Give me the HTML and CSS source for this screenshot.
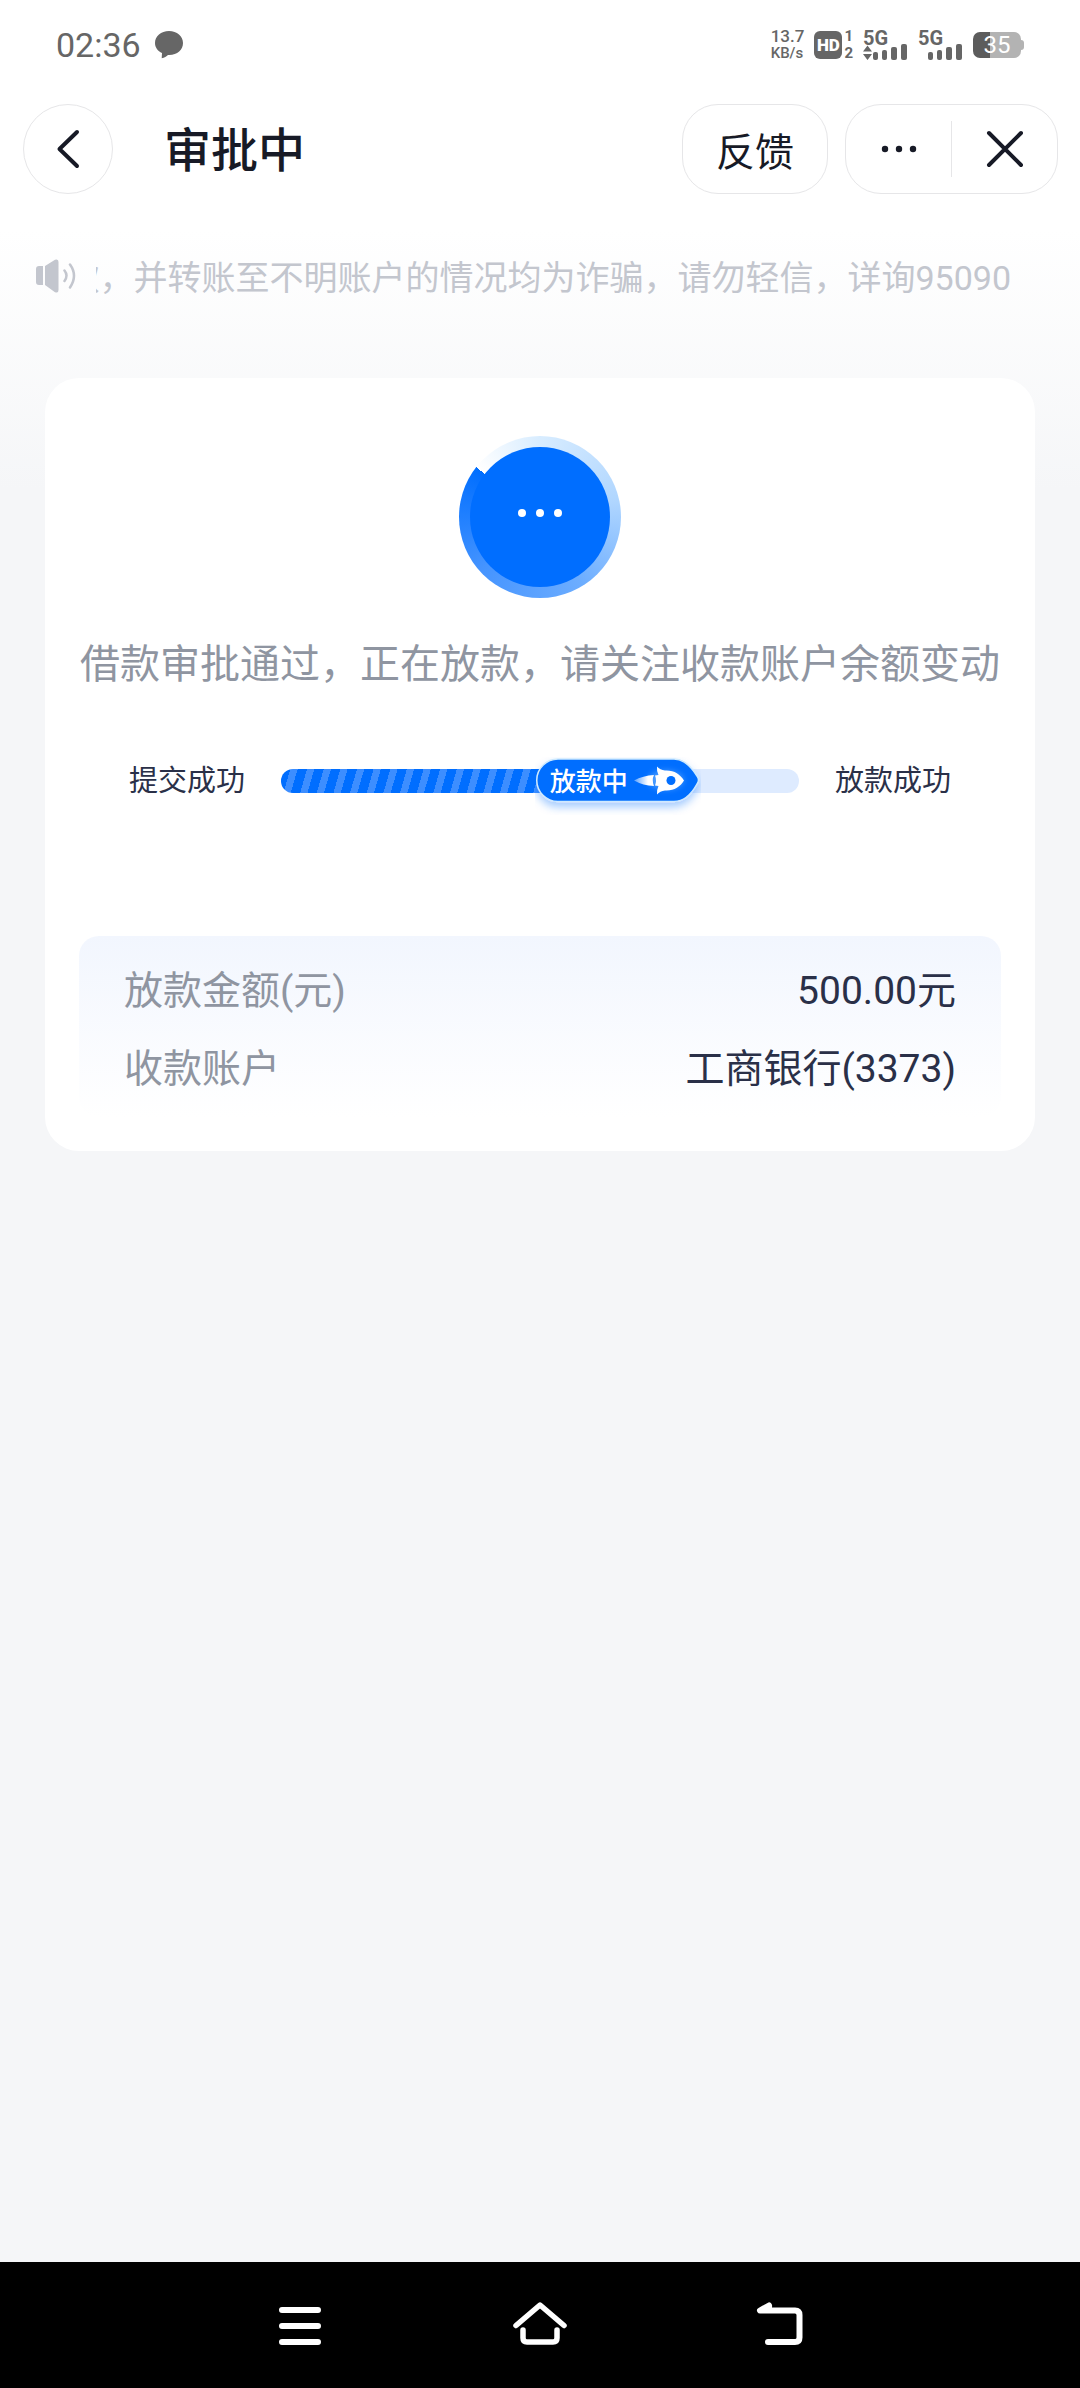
FILE: index.html
```html
<!DOCTYPE html>
<html lang="zh-CN">
<head>
<meta charset="utf-8">
<meta name="viewport" content="width=device-width, initial-scale=1">
<title>审批中</title>
<link rel="stylesheet" href="styles.css">
</head>
<body>
<div class="status">
  <div class="status-left">
    <time class="clock">02:36</time>
    <svg class="icon" width="28" height="28" viewBox="0 0 28 28" aria-hidden="true"><path fill="#666" d="M14 0C6 0 0 5 0 12c0 4.500 2.800 8 7 10l-.3 5.300c2.800-.6 4.800-1.800 6.300-3.300C22 24.500 28 19 28 12 28 5 22 0 14 0z"/></svg>
  </div>
  <div class="status-right">
    <div class="speed"><span class="speed-value">13.7</span><span class="speed-unit">KB/s</span></div>
    <div class="hd">
      <span class="hd-box">HD</span>
      <span class="hd-sims"><span>1</span><span>2</span></span>
    </div>
    <div class="signal">
      <span class="signal-type">5G</span>
      <svg class="signal-bars" width="45" height="17" viewBox="0 0 45 17" aria-hidden="true"><g fill="#666"><path d="M0 7.500 4.500 1.500 9 7.500zM0 10h9l-4.500 6z"/><rect x="10" y="8" width="5" height="8" rx="2"/><rect x="19" y="6" width="5" height="10" rx="2"/><rect x="28" y="3" width="6" height="13" rx="2"/><rect x="38" y="0" width="6" height="16" rx="2"/></g></svg>
    </div>
    <div class="signal">
      <span class="signal-type">5G</span>
      <svg class="signal-bars" width="45" height="17" viewBox="0 0 45 17" aria-hidden="true"><g fill="#666"><rect x="10" y="8" width="5" height="8" rx="2"/><rect x="19" y="6" width="5" height="10" rx="2"/><rect x="28" y="3" width="6" height="13" rx="2"/><rect x="38" y="0" width="6" height="16" rx="2"/></g></svg>
    </div>
    <div class="battery"><span class="battery-level">35</span></div>
  </div>
</div>

<header class="header">
  <button class="back" type="button" aria-label="返回">
    <svg width="24" height="40" viewBox="0 0 24 40" aria-hidden="true"><path d="M21 3 3.500 20 21 37" fill="none" stroke="#171a26" stroke-width="4" stroke-linecap="round" stroke-linejoin="round"/></svg>
  </button>
  <h1 class="title">审批中</h1>
  <button class="feedback" type="button">反馈</button>
  <div class="capsule">
    <button class="capsule-btn" type="button" aria-label="更多">
      <svg width="36" height="8" viewBox="0 0 36 8" aria-hidden="true"><g fill="#171a26"><circle cx="4" cy="4" r="3.200"/><circle cx="18" cy="4" r="3.200"/><circle cx="32" cy="4" r="3.200"/></g></svg>
    </button>
    <button class="capsule-btn" type="button" aria-label="关闭">
      <svg width="38" height="38" viewBox="0 0 38 38" aria-hidden="true"><path d="M3 3 35 35M35 3 3 35" fill="none" stroke="#171a26" stroke-width="4" stroke-linecap="round"/></svg>
    </button>
  </div>
</header>

<main class="page">
  <div class="notice">
    <svg class="icon" width="40" height="34" viewBox="0 0 40 34" aria-hidden="true"><path fill="#c3c6ce" d="M0 10q0-3 3-3h4v19H3q-3 0-3-3zM9 7 19 .8Q22.500-.6 22.500 3v28q0 3.600-3.500 2.200L9 26z"/><path fill="none" stroke="#c3c6ce" stroke-width="2.500" stroke-linecap="round" d="M28.500 11.500q4 5 0 10.500M34 5.500q8 11 0 23"/></svg>
    <p class="notice-text"><span>款，并转账至不明账户的情况均为诈骗，请勿轻信，详询95090</span></p>
  </div>

  <section class="card">
    <div class="ring"><div class="ring-core"><i></i><i></i><i></i></div></div>
    <p class="message">借款审批通过，正在放款，请关注收款账户余额变动</p>

    <div class="progress">
      <span>提交成功</span>
      <div class="track">
        <div class="fill"></div>
        <div class="marker">
          <svg class="marker-shape" width="166" height="62" viewBox="0 0 166 62" aria-hidden="true">
            <defs>
              <filter id="drop" x="-10%" y="-20%" width="120%" height="150%"><feDropShadow dx="0" dy="5" stdDeviation="4" flood-color="#006eff" flood-opacity=".35"/></filter>
              <filter id="glow" x="-50%" y="-50%" width="200%" height="200%"><feGaussianBlur stdDeviation="3"/></filter>
              <linearGradient id="flame"><stop offset="0" stop-color="#fff" stop-opacity=".35"/><stop offset=".7" stop-color="#fff"/></linearGradient>
            </defs>
            <path d="M23 2H139C150 2 157 11 162 19Q165 23 162 27C157 36 150 44.500 139 44.500H23A21.200 21.200 0 0 1 23 2z" fill="#006eff" stroke="#cdeaff" stroke-width="1.500" filter="url(#drop)"/>
            <ellipse cx="131" cy="23" rx="17" ry="9" fill="#8cc4ff" opacity=".6" filter="url(#glow)"/>
            <path fill="url(#flame)" d="M99 23.500Q108 18.500 119 18 116.500 23 119 29 108 28.500 99 23.500z"/>
            <path fill="#fff" d="M122 9.500Q125 13 130 13.500C139 13 145 17 149 23.500 145 30 139 34 130 33.500Q125 34 122 37.500 121.500 33 123.500 29L120 28.500Q122 23.500 120 18.500L123.500 18Q121.500 14 122 9.500z"/>
            <circle cx="136" cy="23.500" r="4.500" fill="#006eff"/>
          </svg>
          <span class="marker-label">放款中</span>
        </div>
      </div>
      <span>放款成功</span>
    </div>

    <dl class="details">
      <div class="row"><dt>放款金额(元)</dt><dd>500.00元</dd></div>
      <div class="row"><dt>收款账户</dt><dd>工商银行(3373)</dd></div>
    </dl>
  </section>
</main>

<nav class="sysnav">
  <button type="button" aria-label="最近任务">
    <svg width="54" height="44" viewBox="0 0 54 44" aria-hidden="true"><path d="M9 9H45M9 25H45M9 41H45" fill="none" stroke="#fff" stroke-width="6" stroke-linecap="round"/></svg>
  </button>
  <button type="button" aria-label="主页">
    <svg width="54" height="44" viewBox="0 0 54 44" aria-hidden="true"><path d="M3 24.500 27 4 51 24.500M10 29V37Q10 41 14 41H40Q44 41 44 37V29" fill="none" stroke="#fff" stroke-width="5.500" stroke-linecap="round" stroke-linejoin="round"/></svg>
  </button>
  <button type="button" aria-label="返回上级">
    <svg width="54" height="44" viewBox="0 0 54 44" aria-hidden="true"><path d="M16 4.500 7 9.500H42Q46.500 9.500 46.500 14V36.500Q46.500 41 42 41H15M16 5.500 13 9" fill="none" stroke="#fff" stroke-width="6" stroke-linecap="round" stroke-linejoin="round"/></svg>
  </button>
</nav>
</body>
</html>
```
FILE: styles.css
```css
* {
  box-sizing: border-box;
}

body {
  margin: 0;
  min-height: 100vh;
  display: flex;
  flex-direction: column;
  background: #f5f6f8 linear-gradient(#fff 230px, #f5f6f8 490px) no-repeat;
  color: #2a3048;
  font-family: Roboto, "Noto Sans CJK SC", sans-serif;
  font-size: 39px;
}

h1, p, dl, dd {
  margin: 0;
}

button {
  display: flex;
  align-items: center;
  justify-content: center;
  padding: 0;
  border: 0;
  background: none;
  color: inherit;
  font: inherit;
}

.icon {
  flex: none;
}

/* Status bar */
.status {
  display: flex;
  justify-content: space-between;
  align-items: center;
  height: 90px;
  padding: 0 59px 0 56px;
  color: #666;
}

.status-left {
  display: flex;
  align-items: center;
  gap: 14px;
}

.clock {
  font-size: 34px;
  line-height: 40px;
}

.status-right {
  display: flex;
  align-items: center;
  gap: 10px;
}

.speed {
  display: flex;
  flex-direction: column;
  font-weight: 500;
  line-height: 17px;
}

.speed-value {
  font-size: 17px;
}

.speed-unit {
  font-size: 15px;
}

.hd {
  display: flex;
  align-items: center;
  gap: 2px;
}

.hd-box {
  width: 28px;
  border-radius: 6px;
  background: #666;
  color: #fff;
  font-size: 17px;
  font-weight: 900;
  line-height: 28px;
  text-align: center;
}

.hd-sims {
  display: flex;
  flex-direction: column;
  font-size: 15px;
  font-weight: 700;
  line-height: 17px;
  text-align: center;
}

.signal {
  position: relative;
  width: 45px;
  height: 32px;
}

.signal-type {
  display: block;
  font-size: 20px;
  font-weight: 700;
  line-height: 18px;
}

.signal-bars {
  position: absolute;
  left: 0;
  bottom: 0;
}

.battery {
  position: relative;
  width: 48px;
  border-radius: 7px;
  background: linear-gradient(90deg, #5c5c5c 35%, #b3b3b3 35%);
  color: #fff;
  font-size: 24px;
  line-height: 26px;
  text-align: center;
}

.battery::after {
  content: "";
  position: absolute;
  left: 100%;
  top: 8px;
  width: 3px;
  height: 10px;
  border-radius: 0 3px 3px 0;
  background: #b3b3b3;
}

/* Title bar */
.header {
  display: flex;
  align-items: center;
  padding: 14px 22px 0 23px;
  color: #171a26;
}

.back {
  width: 90px;
  height: 90px;
  padding-right: 1px;
  border: 1px solid #e6e6e8;
  border-radius: 50%;
  background: #fff;
}

.title {
  flex: 1;
  margin-left: 51px;
  padding-top: 4px;
  font-size: 47px;
  font-weight: 500;
  line-height: 64px;
}

.feedback {
  width: 146px;
  height: 90px;
  margin-right: 17px;
  border: 1px solid #e6e6e8;
  border-radius: 36px;
  background: #fff;
}

.capsule {
  display: flex;
  align-items: center;
  width: 213px;
  height: 90px;
  border: 1px solid #e6e6e8;
  border-radius: 36px;
  background: #fff;
}

.capsule-btn {
  flex: 1;
  height: 56px;
}

.capsule-btn + .capsule-btn {
  border-left: 1px solid #e6e6e8;
}

/* Content */
.page {
  flex: 1;
  padding: 52px 45px;
}

.notice {
  display: flex;
  align-items: center;
  gap: 20px;
  margin: 0 24px 0 -9px;
  color: #c3c6ce;
}

.notice-text {
  flex: 1;
  min-width: 0;
  display: flex;
  justify-content: flex-end;
  overflow: hidden;
  padding-top: 4px;
  font-size: 34px;
  line-height: 56px;
  white-space: nowrap;
}

.card {
  margin-top: 72px;
  padding: 58px 34px 34px;
  border-radius: 34px;
  background: #fff;
}

.ring {
  width: 162px;
  margin: 0 auto;
  padding: 11px;
  border-radius: 50%;
  background: conic-gradient(from 308deg, #fff, #d9edff 50deg, #b0d6ff 130deg, #6cadff 200deg, #4594ff 280deg, #006eff 360deg);
}

.ring-core {
  display: flex;
  align-items: center;
  justify-content: center;
  gap: 10px;
  height: 140px;
  padding-bottom: 8px;
  border-radius: 50%;
  background: #006eff;
}

.ring-core i {
  width: 8px;
  height: 8px;
  border-radius: 50%;
  background: #fff;
}

.message {
  margin-top: 37px;
  color: #8f95a1;
  font-size: 40px;
  line-height: 60px;
  text-align: center;
  white-space: nowrap;
}

.progress {
  display: flex;
  align-items: center;
  gap: 36px;
  margin: 64px 50px 0;
  font-size: 29px;
  line-height: 44px;
}

.track {
  position: relative;
  flex: 1;
  height: 24px;
  border-radius: 12px;
  background: #deebff;
}

.fill {
  width: 53%;
  height: 24px;
  border-radius: 12px 0 0 12px;
  background: repeating-linear-gradient(106deg, #006eff 0 9px, #3d8eff 9px 16px);
}

.marker {
  position: absolute;
  left: 49%;
  top: -12px;
  width: 166px;
}

.marker-shape {
  display: block;
}

.marker-label {
  position: absolute;
  left: 15px;
  top: 3px;
  color: #fff;
  font-size: 26px;
  font-weight: 500;
  line-height: 44px;
}

.details {
  display: flex;
  flex-direction: column;
  gap: 18px;
  margin-top: 133px;
  padding: 25px 45px 18px;
  border-radius: 20px;
  background: linear-gradient(#f2f6fe, #fff);
}

.row {
  display: flex;
  justify-content: space-between;
  line-height: 60px;
}

.row dt {
  color: #8f95a1;
}

/* System navigation */
.sysnav {
  display: flex;
  justify-content: center;
  align-items: center;
  gap: 186px;
  height: 126px;
  padding-bottom: 4px;
  background: #000;
}
```
